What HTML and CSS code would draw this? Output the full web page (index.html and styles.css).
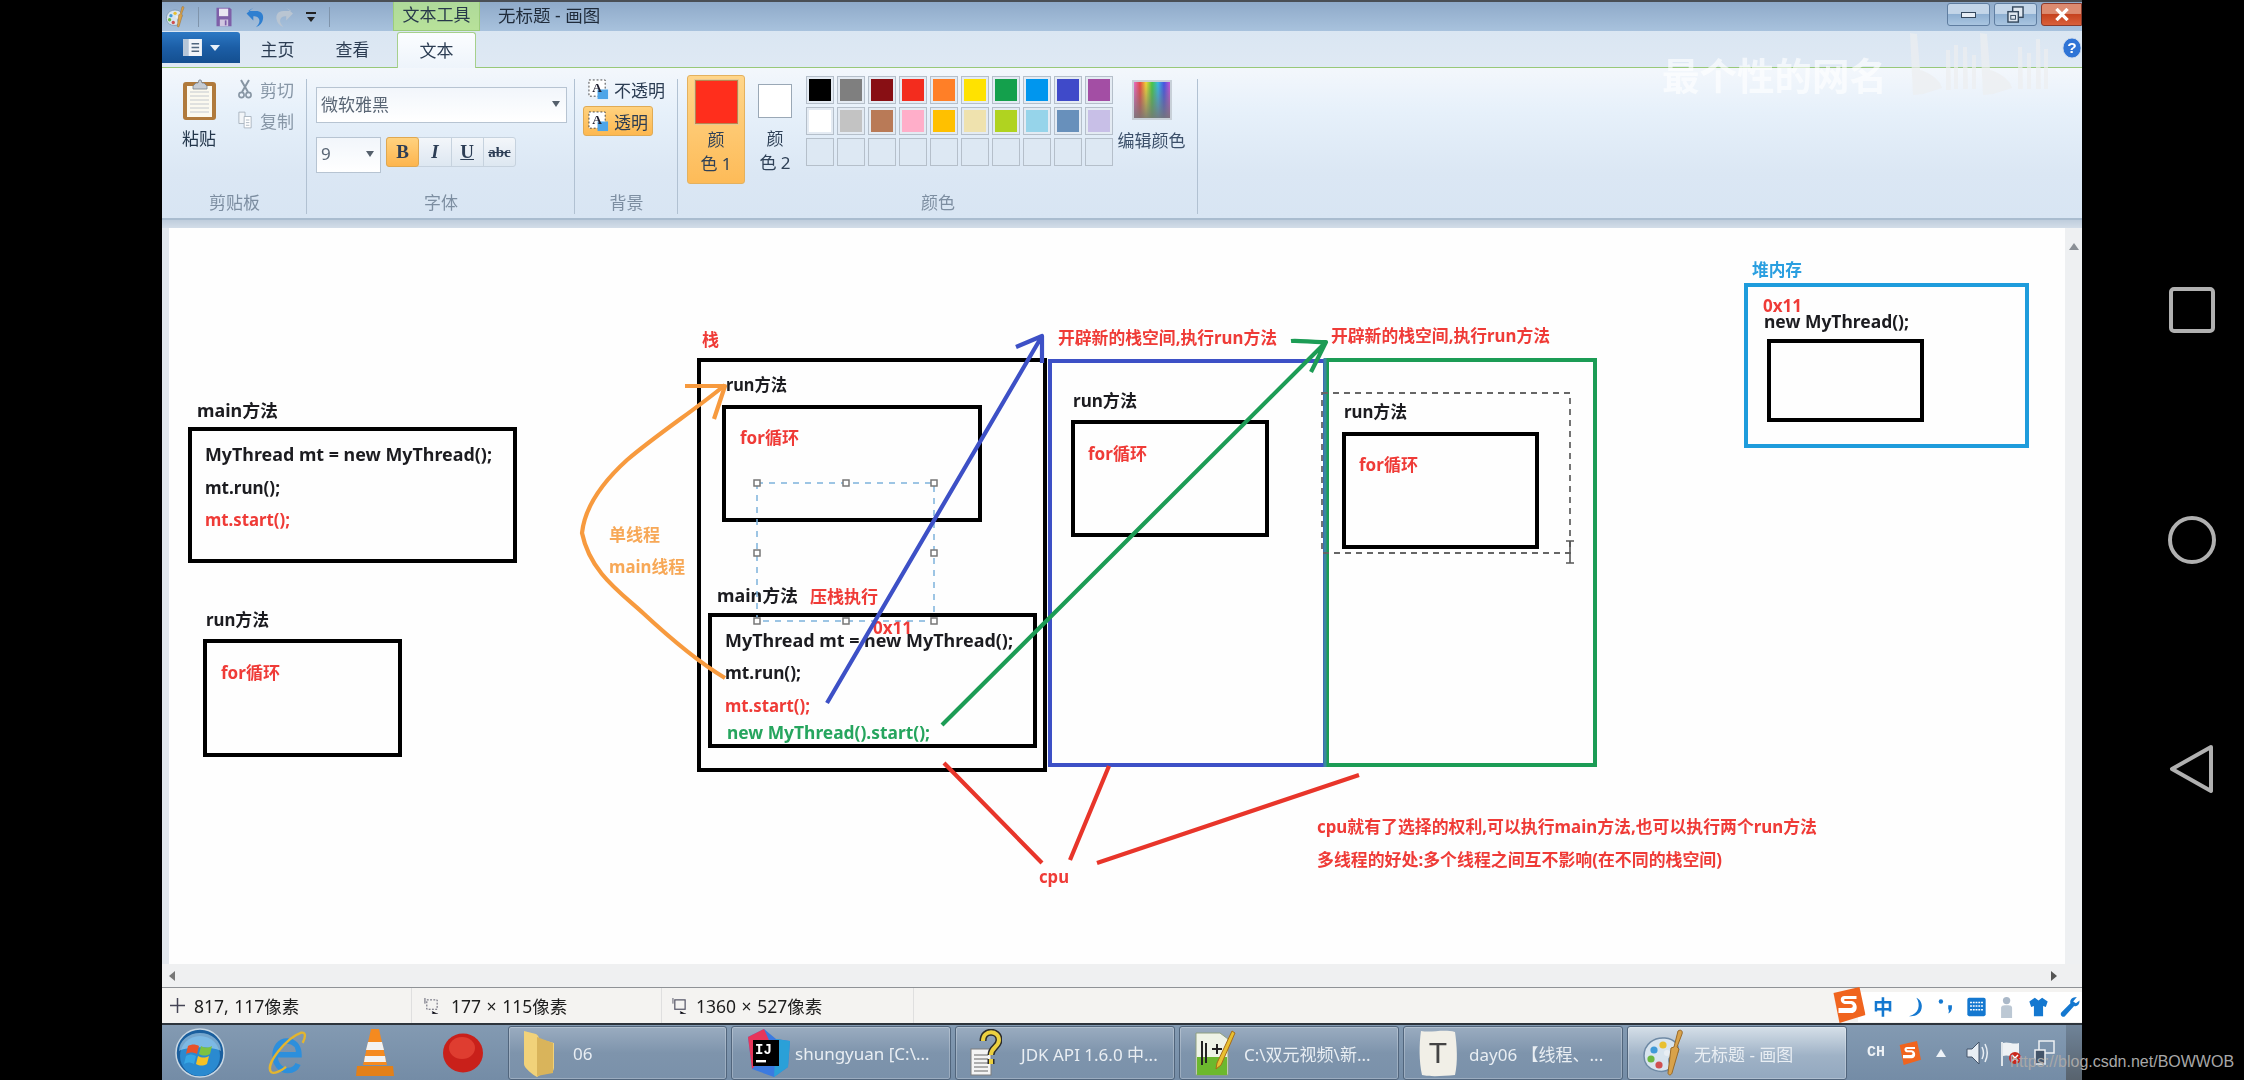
FILE: index.html
```html
<!DOCTYPE html>
<html lang="zh-CN">
<head>
<meta charset="utf-8">
<title>无标题 - 画图</title>
<link rel="stylesheet" href="styles.css">
</head>
<body>
<svg class="defs" width="0" height="0" aria-hidden="true">
  <defs>
    <symbol id="palette" viewBox="0 0 48 48">
      <path d="M3 27C3 15 13 8 24 9c10 1 15 8 13 14-2 5-8 3-9 7-1 4 3 6 0 10-4 5-25 3-25-13z" fill="#d8e4ee" stroke="#6f8aa5" stroke-width="1.5"/>
      <circle cx="13" cy="21" r="3.6" fill="#3f9ad8"/><circle cx="22" cy="16" r="3.6" fill="#e8c030"/>
      <circle cx="10" cy="30" r="3.6" fill="#6cb840"/><circle cx="18" cy="36" r="3.6" fill="#d05050"/><circle cx="26" cy="24" r="3" fill="#e8eef4"/>
      <path d="M37 2c3-2 5 0 4 3l-5 13 2 2-7 24c-1 3-4 2-4 0l3-25 3-1z" fill="#d9a24a" stroke="#9a6a28" stroke-width="1"/>
    </symbol>
    <symbol id="sogou" viewBox="0 0 36 36">
      <path d="M4 6L30 0l6 28-26 8z" fill="#f0641e"/>
      <path d="M27 9H15c-5 0-5 7 0 8h6c3 0 3 4 0 4H9v5h13c7 0 7-11 0-12h-6c-2 0-2-2 0-2h11z" fill="#fff"/>
    </symbol>
    <symbol id="txtA" viewBox="0 0 22 22">
      <rect x="1" y="1" width="17" height="17" fill="#fff" stroke="#444" stroke-dasharray="2 2"/>
      <rect x="10" y="11" width="11" height="10" fill="#4ea5e8"/>
      <text x="9.5" y="14" class="a-glyph">A</text>
    </symbol>
  </defs>
</svg>

<div class="app">
  <header class="titlebar">
    <div class="qat">
      <svg class="i-palette" viewBox="0 0 48 48"><use href="#palette"/></svg>
      <span class="vsep"></span>
      <svg class="i-save" viewBox="0 0 20 24"><path d="M1 1h16l2 2v20H1z" fill="#7e5fa8"/><rect x="4" y="2" width="11" height="9" fill="#e9e5f2"/><rect x="5" y="15" width="10" height="8" fill="#cfc6e0"/><rect x="11" y="16" width="2" height="6" fill="#7e5fa8"/></svg>
      <svg class="i-undo" viewBox="0 0 22 26"><path d="M3 6h9c7 0 10 5 8 11-1 4-5 7-8 8 3-3 5-6 4-9-1-3-3-4-6-4H9v5L1 9l8-7z" fill="#2f7fd0"/></svg>
      <svg class="i-redo" viewBox="0 0 22 26"><path d="M19 6h-9C3 6 0 11 2 17c1 4 5 7 8 8-3-3-5-6-4-9 1-3 3-4 6-4h1v5l8-8-8-7z" fill="#b9c5d2"/></svg>
      <svg class="i-drop" viewBox="0 0 10 12"><rect y="1" width="10" height="2" fill="#222"/><path d="M1 6h8l-4 5z" fill="#222"/></svg>
      <span class="vsep"></span>
    </div>
    <div class="ctx-tab">文本工具</div>
    <div class="doc-title">无标题 - 画图</div>
    <div class="winbtns">
      <div class="wbtn"><span class="glyph-min"></span></div>
      <div class="wbtn"><svg class="glyph-res" viewBox="0 0 18 18"><rect x="6" y="1" width="11" height="11" fill="#dfe7f0" stroke="#33475c" stroke-width="1.5"/><rect x="1" y="6" width="11" height="11" fill="#dfe7f0" stroke="#33475c" stroke-width="1.5"/><rect x="4" y="10" width="5" height="4" fill="none" stroke="#33475c"/></svg></div>
      <div class="wbtn wclose"><svg class="glyph-x" viewBox="0 0 16 14"><path d="M2 1l12 12M14 1L2 13" stroke="#fff" stroke-width="3.6"/></svg></div>
    </div>
  </header>

  <nav class="tabs">
    <div class="appmenu">
      <svg class="i-menu" viewBox="0 0 20 18"><rect width="20" height="18" fill="#f2f5f9"/><rect width="6" height="18" fill="#b5c6d8"/><path d="M9 5h8M9 9h8M9 13h8" stroke="#50677f" stroke-width="1.6"/></svg>
      <span class="menu-caret"></span>
    </div>
    <div class="tab tab-home">主页</div>
    <div class="tab tab-view">查看</div>
    <div class="tab tab-active">文本</div>
    <svg class="help" viewBox="0 0 22 24"><ellipse cx="11" cy="12" rx="10" ry="11" fill="#2f74d6" stroke="#cfdcec"/><text x="11" y="18" class="help-q">?</text></svg>
    <div class="wm-text">最个性的网名</div>
    <svg class="wm-logo" viewBox="0 0 138 62">
      <g fill="#eceef0" fill-opacity=".7">
        <path d="M0 0l7 1 3 36c8 2 14 6 20 13l2 5-19 6-10 1z"/>
        <path d="M36 17h4l1 40h-5zM44 12h4v44h-4zM53 14h4l1 42h-5zM62 22h4v34h-4z"/>
        <path d="M70 0l7 1 3 36c8 2 14 6 20 13l2 5-19 6-10 1z"/>
        <path d="M108 14h4l1 42h-5zM117 20h4v36h-4zM126 6h4l1 50h-5zM134 16h4v40h-4z"/>
      </g>
    </svg>
  </nav>

  <section class="ribbon">
    <div class="group g-clip">
      <div class="group-body clip-body">
        <div class="paste">
          <svg class="i-paste" viewBox="0 0 35 42"><rect x="1" y="3" width="33" height="38" rx="3" fill="#b07a3c"/><rect x="5" y="7" width="25" height="31" fill="#fbf9ef"/><path d="M8 13h19M8 17h19M8 21h19M8 25h19M8 29h19M8 33h19" stroke="#c4c9cf"/><path d="M11 7l3-3h2l1-3h2l1 3h2l3 3v3H11z" fill="#c6ccd4" stroke="#79838e" stroke-width=".8"/></svg>
          <span>粘贴</span>
        </div>
        <div class="clip-small">
          <div class="clip-row"><svg class="i-cut" viewBox="0 0 14 20"><path d="M3 1l7 12M11 1L4 13" stroke="#8795a3" stroke-width="2"/><circle cx="3.5" cy="16" r="2.6" fill="none" stroke="#8795a3" stroke-width="1.6"/><circle cx="10.5" cy="16" r="2.6" fill="none" stroke="#8795a3" stroke-width="1.6"/></svg><span>剪切</span></div>
          <div class="clip-row"><svg class="i-cut" viewBox="0 0 16 20"><path d="M1 1h7v13H1z" fill="#f2f5f8" stroke="#a5b0bc"/><path d="M7 6h8v13H7z" fill="#fff" stroke="#a5b0bc"/><path d="M9 10h4M9 13h4M9 16h4" stroke="#a5b0bc"/></svg><span>复制</span></div>
        </div>
      </div>
      <div class="group-label">剪贴板</div>
    </div>

    <div class="group g-font">
      <div class="group-body font-body">
        <div class="combo combo-family"><span>微软雅黑</span><i class="caret"></i></div>
        <div class="font-row">
          <div class="combo combo-size"><span>9</span><i class="caret"></i></div>
          <div class="fmt">
            <div class="fmt-b fmt-on">B</div>
            <div class="fmt-b fmt-i">I</div>
            <div class="fmt-b fmt-u">U</div>
            <div class="fmt-b fmt-s">abc</div>
          </div>
        </div>
      </div>
      <div class="group-label">字体</div>
    </div>

    <div class="group g-bg">
      <div class="group-body bg-body">
        <div class="bg-opt"><svg class="i-a" viewBox="0 0 22 22"><use href="#txtA"/></svg><span>不透明</span></div>
        <div class="bg-opt bg-on"><svg class="i-a" viewBox="0 0 22 22"><use href="#txtA"/></svg><span>透明</span></div>
      </div>
      <div class="group-label">背景</div>
    </div>

    <div class="group g-color">
      <div class="group-body color-body">
        <div class="cbtn cbtn-on"><div class="big-swatch"></div><span>颜</span><span>色 1</span></div>
        <div class="cbtn cbtn-2"><div class="big-swatch2"></div><span>颜</span><span>色 2</span></div>
        <div class="swatches">
          <i class="sw c1"></i><i class="sw c2"></i><i class="sw c3"></i><i class="sw c4"></i><i class="sw c5"></i><i class="sw c6"></i><i class="sw c7"></i><i class="sw c8"></i><i class="sw c9"></i><i class="sw c10"></i>
          <i class="sw c11"></i><i class="sw c12"></i><i class="sw c13"></i><i class="sw c14"></i><i class="sw c15"></i><i class="sw c16"></i><i class="sw c17"></i><i class="sw c18"></i><i class="sw c19"></i><i class="sw c20"></i>
          <i class="sw"></i><i class="sw"></i><i class="sw"></i><i class="sw"></i><i class="sw"></i><i class="sw"></i><i class="sw"></i><i class="sw"></i><i class="sw"></i><i class="sw"></i>
        </div>
        <div class="edit"><div class="rainbow"></div><span>编辑颜色</span></div>
      </div>
      <div class="group-label">颜色</div>
    </div>
  </section>
  <div class="strip"></div>

  <main class="canvas-row">
    <div class="gutter"></div>
    <div class="canvas">
      <svg class="drawing" viewBox="169 228 1896 736" width="1896" height="736">
        <!-- left: main + run -->
        <text x="197" y="417" class="t" textLength="81" lengthAdjust="spacingAndGlyphs">main方法</text>
        <rect x="190" y="429" width="325" height="132" class="box"/>
        <text x="205" y="461" class="t" textLength="287" lengthAdjust="spacingAndGlyphs">MyThread mt = new MyThread();</text>
        <text x="205" y="494" class="t" textLength="75" lengthAdjust="spacingAndGlyphs">mt.run();</text>
        <text x="205" y="526" class="t red" textLength="85" lengthAdjust="spacingAndGlyphs">mt.start();</text>
        <text x="206" y="626" class="t" textLength="63" lengthAdjust="spacingAndGlyphs">run方法</text>
        <rect x="205" y="641" width="195" height="114" class="box"/>
        <text x="221" y="679" class="t red" textLength="59" lengthAdjust="spacingAndGlyphs">for循环</text>

        <!-- stack -->
        <text x="702" y="346" class="t red">栈</text>
        <rect x="699" y="360" width="346" height="410" class="box"/>
        <text x="726" y="391" class="t" textLength="61" lengthAdjust="spacingAndGlyphs">run方法</text>
        <rect x="724" y="407" width="256" height="113" class="box"/>
        <text x="740" y="444" class="t red" textLength="59" lengthAdjust="spacingAndGlyphs">for循环</text>
        <text x="717" y="602" class="t" textLength="81" lengthAdjust="spacingAndGlyphs">main方法</text>
        <text x="810" y="603" class="t red">压栈执行</text>
        <rect x="710" y="615" width="325" height="131" class="box"/>
        <text x="873" y="634" class="t red" textLength="39" lengthAdjust="spacingAndGlyphs">0x11</text>
        <text x="725" y="647" class="t" textLength="288" lengthAdjust="spacingAndGlyphs">MyThread mt = new MyThread();</text>
        <text x="725" y="679" class="t" textLength="76" lengthAdjust="spacingAndGlyphs">mt.run();</text>
        <text x="725" y="712" class="t red" textLength="85" lengthAdjust="spacingAndGlyphs">mt.start();</text>
        <text x="727" y="739" class="t green" textLength="203" lengthAdjust="spacingAndGlyphs">new MyThread().start();</text>

        <!-- text selection -->
        <rect x="757" y="483" width="177" height="138" class="sel"/>
        <rect x="754" y="480" width="6" height="6" class="hdl"/><rect x="843" y="480" width="6" height="6" class="hdl"/><rect x="931" y="480" width="6" height="6" class="hdl"/>
        <rect x="754" y="550" width="6" height="6" class="hdl"/><rect x="931" y="550" width="6" height="6" class="hdl"/>
        <rect x="754" y="618" width="6" height="6" class="hdl"/><rect x="843" y="618" width="6" height="6" class="hdl"/><rect x="931" y="618" width="6" height="6" class="hdl"/>

        <!-- orange -->
        <path d="M725 678C700 663 672 640 643 613C620 592 590 572 582 533C585 505 605 480 627 460C660 432 695 410 725 385" class="pen orange-s"/>
        <path d="M685 386H725L714 419" class="pen orange-s"/>
        <text x="609" y="541" class="t orange">单线程</text>
        <text x="609" y="573" class="t orange" textLength="76" lengthAdjust="spacingAndGlyphs">main线程</text>

        <!-- blue + green stacks -->
        <rect x="1050" y="361" width="275" height="404" class="box blue-s"/>
        <rect x="1327" y="360" width="268" height="405" class="box green-s"/>
        <path d="M1325 358V767" class="teal"/>
        <text x="1058" y="344" class="t red" textLength="219" lengthAdjust="spacingAndGlyphs">开辟新的栈空间,执行run方法</text>
        <text x="1331" y="342" class="t red" textLength="219" lengthAdjust="spacingAndGlyphs">开辟新的栈空间,执行run方法</text>
        <text x="1073" y="407" class="t" textLength="64" lengthAdjust="spacingAndGlyphs">run方法</text>
        <rect x="1073" y="422" width="194" height="113" class="box"/>
        <text x="1088" y="460" class="t red" textLength="59" lengthAdjust="spacingAndGlyphs">for循环</text>
        <rect x="1322" y="393" width="248" height="160" class="dash"/>
        <text x="1344" y="418" class="t" textLength="63" lengthAdjust="spacingAndGlyphs">run方法</text>
        <rect x="1344" y="434" width="193" height="113" class="box"/>
        <text x="1359" y="471" class="t red" textLength="59" lengthAdjust="spacingAndGlyphs">for循环</text>
        <path d="M1566 541h8M1570 541v22M1566 563h8" class="ibeam"/>

        <!-- arrows -->
        <path d="M827 703L1042 336M1016 347L1042 336V363" class="pen blue-s"/>
        <path d="M942 725L1326 342M1291 341C1300 340 1315 343 1326 342L1311 372" class="pen green-s"/>

        <!-- cpu -->
        <path d="M944 763L1042 863M1109 766L1070 860M1359 775L1097 863" class="pen red-s"/>
        <text x="1039" y="883" class="t red" textLength="30" lengthAdjust="spacingAndGlyphs">cpu</text>
        <text x="1317" y="833" class="t red" textLength="500" lengthAdjust="spacingAndGlyphs">cpu就有了选择的权利,可以执行main方法,也可以执行两个run方法</text>
        <text x="1317" y="866" class="t red" textLength="405" lengthAdjust="spacingAndGlyphs">多线程的好处:多个线程之间互不影响(在不同的栈空间)</text>

        <!-- heap -->
        <text x="1752" y="276" class="t sky" textLength="50" lengthAdjust="spacingAndGlyphs">堆内存</text>
        <rect x="1746" y="285" width="281" height="161" class="box sky-s"/>
        <text x="1763" y="312" class="t red" textLength="39" lengthAdjust="spacingAndGlyphs">0x11</text>
        <text x="1764" y="328" class="t" textLength="145" lengthAdjust="spacingAndGlyphs">new MyThread();</text>
        <rect x="1769" y="341" width="153" height="79" class="box"/>
      </svg>
    </div>
    <div class="vscroll"><i class="arrow-up"></i></div>
  </main>

  <div class="hscroll"><i class="arrow-left"></i><i class="arrow-right"></i></div>

  <footer class="status">
    <div class="st st-1">
      <svg class="st-i" viewBox="0 0 14 14"><path d="M7 0v14M0 7h14" stroke="#445" stroke-width="1.4"/></svg><span>817, 117像素</span>
    </div>
    <div class="st st-2">
      <svg class="st-i" viewBox="0 0 16 18"><rect x="3" y="3" width="11" height="10" fill="none" stroke="#556" stroke-dasharray="2 1.5"/><path d="M1 1v6M9 15v3h6" stroke="#556"/></svg><span>177 × 115像素</span>
    </div>
    <div class="st st-3">
      <svg class="st-i" viewBox="0 0 16 18"><rect x="3" y="3" width="11" height="10" fill="none" stroke="#556" stroke-width="1.3"/><path d="M1 1v6M9 15v3h6" stroke="#556"/></svg><span>1360 × 527像素</span>
    </div>
    <div class="ime">
      <svg class="ime-s" viewBox="0 0 36 36"><use href="#sogou"/></svg>
      <span class="ime-i ime-zh">中</span>
      <svg class="ime-i" viewBox="0 0 20 24"><path d="M12 2c5 7 3 18-8 20 6 1 14-2 14-11 0-4-3-8-6-9z" fill="#1478d0"/></svg>
      <svg class="ime-i" viewBox="0 0 20 24"><circle cx="5" cy="6" r="2.4" fill="#1478d0"/><path d="M13 10h4v3c0 3-2 5-4 6 1-2 1-3 0-5z" fill="#1478d0"/></svg>
      <svg class="ime-i" viewBox="0 0 22 24"><rect x="1" y="2" width="20" height="20" rx="2" fill="#1478d0"/><path d="M4 7h14M4 11h14M4 15h14" stroke="#fff" stroke-width="1.6" stroke-dasharray="2 1"/></svg>
      <svg class="ime-i" viewBox="0 0 20 24"><circle cx="9" cy="5" r="4" fill="#aab8c8"/><path d="M3 24V13c0-3 3-3 6-3s6 0 6 3v11z" fill="#bcc8d4"/></svg>
      <svg class="ime-i" viewBox="0 0 22 24"><path d="M7 2L1 6l2 6 3-1v11h10V11l3 1 2-6-6-4-4 3z" fill="#1478d0"/></svg>
      <svg class="ime-i" viewBox="0 0 22 24"><path d="M19 1c-5 0-8 3-7 7L2 18c-2 3 2 6 4 4L16 11c3 1 6-1 6-6l-4 3-3-2z" fill="#1478d0"/></svg>
    </div>
  </footer>

  <div class="taskbar">
    <div class="quick">
      <svg class="i-orb" viewBox="0 0 50 50">
        <circle cx="25" cy="25" r="24" fill="#1a5f9e" stroke="#c9d8e4" stroke-width="1.5"/>
        <circle cx="25" cy="28" r="20" fill="#2a8ad0"/>
        <path d="M4 23a21 18 0 0 1 42 0c-10-5-32-5-42 0z" fill="#bfe0f4" fill-opacity=".55"/>
        <path d="M13 18c4-2 7-2 11 0l-2 8c-4-2-7-2-11 0z" fill="#e8522a"/>
        <path d="M26 18c4 2 7 2 11 0l-2 8c-4 2-7 2-11 0z" fill="#7cc242"/>
        <path d="M11 28c4-2 7-2 10 0l-2 8c-4-2-7-2-10 0z" fill="#35a6e4"/>
        <path d="M23 28c4 2 7 2 11 0l-2 8c-4 2-7 2-11 0z" fill="#f6c125"/>
      </svg>
      <svg class="i-ie" viewBox="0 0 44 50">
        <path d="M12 27h23c0-9-5-15-13-15S9 19 9 28s6 16 14 16c5 0 9-2 11-7" fill="none" stroke="#2d8fdc" stroke-width="6"/>
        <path d="M5 46C-3 38 22 8 37 3c5-1 6 3 2 11M5 46c3 2 10-1 16-6" fill="none" stroke="#e3b52f" stroke-width="2.6"/>
      </svg>
      <svg class="i-vlc" viewBox="0 0 40 50"><path d="M16 1h8l8 36H8z" fill="#f58a1f"/><path d="M13 14h14l2 8H11zM10 28h20l1 6H9z" fill="#f2f2f2"/><path d="M2 38h36l1 10H1z" fill="#e2801a"/></svg>
      <svg class="i-rec" viewBox="0 0 42 40"><ellipse cx="21" cy="20" rx="20" ry="19.5" fill="#c9201a"/><ellipse cx="20" cy="15" rx="13" ry="11" fill="#e84a3a" fill-opacity=".7"/></svg>
    </div>
    <div class="tasks">
      <div class="task"><svg class="ti ti-folder" viewBox="0 0 32 48"><path d="M1 2l12 3c2 1 3 3 3 5l15 4v24c0 3-1 5-4 5l-7 1-6 4c-4-2-13-9-13-13z" fill="#f1d27a"/><path d="M14 8l16 6v30l-16 3z" fill="#d9b45b"/></svg><span>06</span></div>
      <div class="task"><svg class="ti ti-ij" viewBox="0 0 44 48"><path d="M2 8l16-8 12 10 14 2-2 26-14 10L6 40z" fill="#3b7ae0"/><path d="M2 8l16-8 8 18L6 40z" fill="#e8365a"/><path d="M30 10l14 2-2 26-14 10z" fill="#2aa0d8"/><rect x="7" y="11" width="26" height="26" fill="#000"/><text x="9" y="25" class="ij-t">IJ</text><rect x="10" y="31" width="10" height="2.4" fill="#fff"/></svg><span>shungyuan [C:\...</span></div>
      <div class="task"><svg class="ti ti-help" viewBox="0 0 32 48"><rect x="1" y="20" width="20" height="26" fill="#f4f4f4" stroke="#7e7e7e"/><path d="M4 26h14M4 30h14M4 34h14M4 38h14M4 42h14" stroke="#666"/><path d="M13 12c0-12 16-11 16-1 0 7-8 7-8 15M21 30v5" fill="none" stroke="#2b2b2b" stroke-width="7"/><path d="M13 12c0-12 16-11 16-1 0 7-8 7-8 15M21 30v5" fill="none" stroke="#ecd040" stroke-width="4"/></svg><span>JDK API 1.6.0 中...</span></div>
      <div class="task"><svg class="ti ti-npp" viewBox="0 0 42 48"><path d="M2 4h24l8 6v36H2z" fill="#eef3e6" stroke="#8fa080"/><rect x="3" y="28" width="30" height="18" fill="#6cb82e"/><path d="M8 12v24M12 14v20M18 20h10M23 15v10" stroke="#222" stroke-width="2"/><path d="M38 2l3 2-14 32-5 4 1-6z" fill="#e8c030" stroke="#a86c18"/></svg><span>C:\双元视频\新...</span></div>
      <div class="task"><svg class="ti ti-typ" viewBox="0 0 40 48"><path d="M3 2c10 2 22-2 34 1 2 14 3 30 0 43-12 1-24 2-33 0-3-14-3-30-1-44z" fill="#f1efe7"/><text x="20" y="34" class="typ-t">T</text></svg><span>day06 【线程、...</span></div>
      <div class="task task-on"><svg class="ti ti-paint" viewBox="0 0 48 48"><use href="#palette"/></svg><span>无标题 - 画图</span></div>
    </div>
    <div class="tray">
      <span class="tray-ch">CH</span>
      <svg class="tray-s" viewBox="0 0 36 36"><use href="#sogou"/></svg>
      <svg class="tray-up" viewBox="0 0 10 8"><path d="M5 0l5 8H0z" fill="#eef3f8"/></svg>
      <svg class="tray-i" viewBox="0 0 22 26"><path d="M1 9h5l7-7v22l-7-7H1z" fill="#e8eef4" stroke="#44556a"/><path d="M16 7c2 4 2 8 0 12M19 4c3 6 3 12 0 18" fill="none" stroke="#e8eef4" stroke-width="1.5"/></svg>
      <svg class="tray-i" viewBox="0 0 22 26"><path d="M2 2v24" stroke="#dfe5ea" stroke-width="2"/><path d="M3 3c5-2 10 2 16 0v13c-6 2-11-2-16 0z" fill="#eef1f4"/><circle cx="15" cy="18" r="6" fill="#c9281c"/><path d="M12 15l6 6M18 15l-6 6" stroke="#fff" stroke-width="1.5"/></svg>
      <svg class="tray-i" viewBox="0 0 22 26"><rect x="5" y="1" width="15" height="12" fill="none" stroke="#eef1f4" stroke-width="1.5"/><rect x="1" y="10" width="10" height="14" fill="#44556a" stroke="#eef1f4" stroke-width="1.5"/></svg>
      <div class="show-desktop"></div>
    </div>
  </div>
</div>

<aside class="navbar">
  <svg class="nav-i" viewBox="0 0 48 50"><rect x="3" y="3" width="42" height="42" rx="3" class="nav-s"/></svg>
  <svg class="nav-i" viewBox="0 0 48 50"><circle cx="24" cy="25" r="22" class="nav-s"/></svg>
  <svg class="nav-i" viewBox="0 0 48 50"><path d="M43 3L4 25l39 22z" class="nav-s nav-j"/></svg>
</aside>

<div class="csdn">https://blog.csdn.net/BOWWOB</div>
</body>
</html>
```

FILE: styles.css
```css
* { box-sizing: border-box; }
html, body { margin: 0; padding: 0; }
body {
  width: 2244px; height: 1080px; overflow: hidden; background: #000;
  display: flex; padding-left: 162px; position: relative;
  font-family: "Noto Sans", "Noto Sans CJK SC", sans-serif;
  font-size: 17px; color: #2b3c52;
}
.defs { position: absolute; }
.a-glyph { font: 700 14px "Liberation Serif", serif; fill: #223; text-anchor: middle; }

.app { width: 1920px; height: 1080px; display: flex; flex-direction: column; flex: none; filter: blur(.55px); background: #dce8f4; overflow: hidden; }

/* title bar */
.titlebar {
  height: 31px; flex: none; display: flex; align-items: stretch; position: relative;
  border-top: 2px solid #4a4f55;
  background: linear-gradient(#8faac9, #a8c2dd);
}
.qat { display: flex; align-items: center; width: 231px; padding-left: 2px; flex: none; }
.i-palette { width: 24px; height: 22px; }
.vsep { width: 1px; height: 20px; background: #7f94ab; margin-left: 10px; }
.i-save { width: 20px; height: 20px; margin-left: 15px; }
.i-undo { width: 20px; height: 22px; margin-left: 11px; }
.i-redo { width: 19px; height: 22px; margin-left: 10px; }
.i-drop { width: 10px; height: 12px; margin-left: 12px; }
.qat .vsep:last-child { margin-left: 13px; }
.ctx-tab {
  width: 87px; display: flex; align-items: center; justify-content: center; padding-bottom: 6px; flex: none;
  background: linear-gradient(#aed99a, #b8e29a); border: 1px solid #9ccc7c; border-top: none; color: #27384a;
  font-size: 17px;
}
.doc-title { margin-left: 18px; line-height: 27px; font-size: 17.5px; color: #1f2b3a; }
.winbtns { margin-left: auto; display: flex; gap: 4px; padding-top: 1px; }
.wbtn {
  width: 43px; height: 23px; border: 1px solid #5f7da0; border-radius: 3px;
  background: linear-gradient(#c3d5e8 45%, #8fb0d2 50%, #a9c5e0);
  display: flex; align-items: center; justify-content: center;
}
.wclose { width: 41px; border-color: #8a3b2c; border-radius: 3px 0 0 3px; background: linear-gradient(#dc8b70 45%, #c6431f 50%, #d9603a); }
.glyph-min { width: 15px; height: 6px; background: #e6edf5; border: 1px solid #34485e; }
.glyph-res { width: 17px; height: 17px; }
.glyph-x { width: 16px; height: 13px; }

/* tabs */
.tabs {
  height: 37px; flex: none; display: flex; position: relative; padding-top: 1px;
  background: linear-gradient(#dae6f2, #dfe9f4); border-bottom: 1px solid #98c878;
}
.appmenu {
  width: 78px; height: 31px; border-radius: 0 3px 0 0; display: flex; align-items: center;
  padding-left: 21px; gap: 8px; background: linear-gradient(#2c78c4, #1c5ea6 50%, #144f90);
}
.i-menu { width: 19px; height: 17px; }
.menu-caret { border: 5px solid transparent; border-top: 6px solid #e8f0f8; margin-top: 5px; }
.tab { height: 33px; display: flex; align-items: center; justify-content: center; font-size: 17px; flex: none; }
.tab-home { width: 75px; }
.tab-view { width: 75px; }
.tab-active {
  width: 79px; margin-left: 7px; height: 36px; margin-bottom: -1px; padding-bottom: 3px;
  background: linear-gradient(#fbfdff, #eef4fb); border: 1px solid #a6d08c; border-bottom: none; border-radius: 3px 3px 0 0;
  position: relative; z-index: 1;
}
.help { position: absolute; left: 1900px; top: 5px; width: 20px; height: 24px; }
.help-q { font: 700 17px "Liberation Sans", sans-serif; fill: #fff; text-anchor: middle; }
.wm-text {
  position: absolute; left: 1500px; top: 24px; font: 700 37.5px/1 "Noto Sans CJK SC", sans-serif;
  color: rgba(255,255,255,.62); white-space: nowrap; z-index: 3;
}
.wm-logo { position: absolute; left: 1748px; top: 2px; width: 138px; height: 62px; z-index: 3; }

/* ribbon */
.ribbon {
  height: 150px; flex: none; display: flex; padding-top: 7px;
  background: linear-gradient(#f3f7fc, #e6f0fa 30%, #dbe7f4 70%, #d8e5f3);
}
.group { position: relative; display: flex; flex-direction: column; flex: none; height: 143px; }
.group::after { content: ""; position: absolute; right: 0; top: 4px; bottom: 4px; width: 1px; background: #b1c1d2; }
.group-body { height: 118px; flex: none; }
.group-label { height: 20px; line-height: 20px; text-align: center; color: #7d8ea1; font-size: 17px; }
.g-clip { width: 145px; }
.g-font { width: 268px; }
.g-bg { width: 103px; }
.g-color { width: 520px; }

.clip-body { display: flex; padding: 4px 0 0 19px; }
.paste { width: 36px; display: flex; flex-direction: column; align-items: center; font-size: 17px; color: #23364b; }
.i-paste { width: 35px; height: 42px; margin-bottom: 4px; }
.clip-small { margin-left: 21px; display: flex; flex-direction: column; gap: 11px; }
.clip-row { display: flex; align-items: center; gap: 8px; height: 20px; color: #8796a6; }
.i-cut { width: 14px; height: 20px; }

.font-body { padding: 12px 0 0 9px; display: flex; flex-direction: column; gap: 14px; }
.combo {
  height: 36px; background: linear-gradient(#f2f6fb, #fff); border: 1px solid #b7c4d2;
  display: flex; align-items: center; justify-content: space-between; padding: 0 6px 4px 4px; color: #5a6675;
}
.combo-family { width: 251px; }
.combo-size { width: 65px; }
.caret { border: 4px solid transparent; border-top: 6px solid #55606c; margin-top: 5px; }
.font-row { display: flex; gap: 5px; align-items: flex-start; }
.fmt { display: flex; width: 130px; height: 30px; border: 1px solid #c6d2de; border-radius: 3px; background: linear-gradient(#f3f6fa, #dde7f1); }
.fmt-b {
  flex: 1; display: flex; align-items: center; justify-content: center; border-right: 1px solid #c6d2de;
  font: 700 19px "Liberation Serif", serif; color: #2c3d55;
}
.fmt-on { background: linear-gradient(#ffd27f, #fdb54e); border: 1px solid #e0a850; border-radius: 3px; margin: -1px 0 -1px -1px; }
.fmt-i { font-style: italic; }
.fmt-u { text-decoration: underline; }
.fmt-s { border-right: none; font-size: 15px; text-decoration: line-through; }

.bg-body { padding: 1px 0 0 8px; display: flex; flex-direction: column; gap: 3px; }
.bg-opt { height: 27px; display: flex; align-items: center; gap: 5px; padding-left: 5px; color: #2b3c52; }
.bg-on { width: 70px; height: 30px; background: linear-gradient(#ffd27f, #fdb850); border: 1px solid #e0ab55; border-radius: 3px; padding-left: 4px; }
.i-a { width: 21px; height: 21px; flex: none; }

.color-body { display: flex; padding-left: 9px; align-items: flex-start; }
.cbtn { display: flex; flex-direction: column; align-items: center; flex: none; line-height: 24px; color: #2f4157; }
.cbtn-on { width: 58px; height: 109px; padding-top: 4px; background: linear-gradient(#ffd68a, #fdbb58); border: 1px solid #e4b15e; border-radius: 3px; }
.cbtn-on span:first-of-type, .cbtn-2 span:first-of-type { margin-top: 4px; }
.big-swatch { width: 43px; height: 44px; background: #ff2e1c; border: 1px solid #b8864e; outline: 1px solid #e8c994; }
.cbtn-2 { width: 46px; margin-left: 7px; padding-top: 9px; }
.big-swatch2 { width: 34px; height: 34px; background: #fff; border: 1px solid #9aa8b6; margin-bottom: 5px; }
.swatches { margin: 1px 0 0 8px; width: 307px; flex: none; display: grid; grid-template-columns: repeat(10, 28px); grid-auto-rows: 28px; gap: 3px; }
.sw { display: block; border: 3px solid #e4ebf3; outline: 1px solid #b5bfca; outline-offset: -1px; background: #dde8f3; }
.sw:nth-child(n+21) { border: 1px solid #b5bfca; outline: none; }
.c1 { background: #000; } .c2 { background: #7f7f7f; } .c3 { background: #880f14; } .c4 { background: #f32c1e; }
.c5 { background: #ff7f27; } .c6 { background: #ffe200; } .c7 { background: #14a04c; } .c8 { background: #0096ee; }
.c9 { background: #3f4ac9; } .c10 { background: #a34ea4; } .c11 { background: #fff; } .c12 { background: #c3c3c3; }
.c13 { background: #b97a57; } .c14 { background: #ffaec9; } .c15 { background: #ffc000; } .c16 { background: #efe2ae; }
.c17 { background: #b0d320; } .c18 { background: #96d4ea; } .c19 { background: #6890bb; } .c20 { background: #c8bfe7; }
.edit { margin-left: 5px; width: 67px; flex: none; display: flex; flex-direction: column; align-items: center; white-space: nowrap; color: #3c506a; padding-top: 5px; }
.rainbow {
  width: 40px; height: 40px; border: 2px solid #c8d0d8; margin-bottom: 7px;
  background: linear-gradient(rgba(255,255,255,.1), rgba(120,120,120,.9)),
    linear-gradient(90deg, #e060c0, #e83030, #f0d020, #30c030, #20b0e0, #3040e0, #c040d0);
}

.strip { height: 10px; flex: none; border-top: 2px solid #a9bccf; background: linear-gradient(#bfcddc, #d3dde8); }

/* canvas */
.canvas-row { height: 736px; flex: none; display: flex; }
.gutter { width: 7px; flex: none; background: #e2e7ed; }
.canvas { width: 1896px; flex: none; background: #fefefe; overflow: hidden; }
.drawing { display: block; }
.vscroll { flex: 1; background: #eef0f2; display: flex; justify-content: center; padding-top: 10px; }
.arrow-up { border: 5px solid transparent; border-bottom: 7px solid #8a8f96; height: 0; }

.t { font-family: "Noto Sans", "Noto Sans CJK SC", sans-serif; font-weight: 700; font-size: 17px; fill: #1c1c20; }
.red { fill: #ef3b37; }
.green { fill: #26a55e; }
.orange { fill: #f7a857; }
.sky { fill: #2a9fe0; }
.box { fill: none; stroke: #000; stroke-width: 4; }
.blue-s { stroke: #3d50c6; }
.green-s { stroke: #1c9c55; }
.sky-s { stroke: #1e9cdc; }
.teal { stroke: #3a88a0; stroke-width: 3; fill: none; }
.pen { fill: none; stroke-width: 4.2; stroke-linecap: butt; stroke-linejoin: round; }
.orange-s { stroke: #f79a3e; }
.red-s { stroke: #e8352a; }
.sel { fill: none; stroke: #7db2dc; stroke-width: 1.5; stroke-dasharray: 6 6; }
.hdl { fill: #fff; stroke: #777; stroke-width: 1.5; }
.dash { fill: none; stroke: #666; stroke-width: 1.8; stroke-dasharray: 6 5; }
.ibeam { fill: none; stroke: #555; stroke-width: 1.6; }

/* scroll + status */
.hscroll { height: 24px; flex: none; background: #eff0f1; border-bottom: 1px solid #8f9296; display: flex; justify-content: space-between; align-items: center; padding: 0 25px 0 8px; }
.arrow-left { border: 5px solid transparent; border-right: 6px solid #777; margin-left: -6px; }
.arrow-right { border: 5px solid transparent; border-left: 6px solid #555; margin-right: -5px; }
.status { height: 35px; flex: none; display: flex; background: #f4f3f1; position: relative; color: #1d1d1d; }
.st { display: flex; align-items: center; border-right: 1px solid #dfdfdf; padding-left: 8px; font-size: 17.5px; word-spacing: 1px; white-space: nowrap; flex: none; }
.st-1 { width: 250px; gap: 9px; }
.st-2 { width: 250px; gap: 12px; padding-left: 12px; }
.st-3 { width: 252px; gap: 9px; padding-left: 10px; }
.st-i { width: 15px; height: 17px; flex: none; }
.ime {
  margin-left: auto; width: 224px; height: 30px; align-self: flex-end; margin-bottom: 1px; background: #fff; position: relative;
  display: flex; align-items: center; padding-left: 15px; gap: 10px;
}
.ime-s { position: absolute; left: -29px; top: -5px; width: 37px; height: 36px; }
.ime-i { width: 21px; height: 22px; flex: none; }
.ime-zh { font: 700 20px/22px "Noto Sans CJK SC", sans-serif; color: #1478d0; }

/* taskbar */
.taskbar {
  height: 57px; flex: none; display: flex; align-items: stretch; border-top: 2px solid #2d343c;
  background: linear-gradient(#839ab2, #748ca6);
}
.quick { width: 346px; flex: none; display: flex; align-items: center; position: relative; padding-left: 13px; }
.i-orb { width: 50px; height: 50px; flex: none; }
.i-ie { width: 44px; height: 46px; margin-left: 40px; flex: none; }
.i-vlc { width: 40px; height: 50px; margin-left: 46px; flex: none; }
.i-rec { width: 42px; height: 40px; margin-left: 47px; flex: none; }
.tasks { display: flex; gap: 4px; flex: none; }
.task {
  width: 219px; height: 54px; border: 1px solid #51657c; border-radius: 3px; margin-top: 1px;
  background: linear-gradient(#9aacc0, #7e94ac 50%, #7a91aa);
  box-shadow: inset 0 0 0 1px rgba(255,255,255,.25);
  display: flex; align-items: center; gap: 5px; padding-left: 14px; color: #e9eef3; white-space: nowrap;
}
.task:nth-child(n+2) { width: 220px; }
.task-on { background: linear-gradient(#d5dfe8, #9fb2c6 55%, #93a8bf); }
.ti { width: 34px; height: 48px; flex: none; }
.ti-folder { width: 32px; margin-right: 13px; }
.ti-ij { width: 44px; }
.ti-help { width: 32px; margin-right: 14px; }
.ti-npp { width: 42px; margin-right: 3px; }
.ti-typ { width: 40px; margin-right: 6px; }
.ti-paint { width: 48px; margin-left: -1px; }
.ij-t { font: 700 14px "Liberation Mono", monospace; fill: #fff; }
.typ-t { font: 400 30px "Liberation Sans", sans-serif; fill: #444; text-anchor: middle; }
.tray { flex: 1; position: relative; display: flex; align-items: center; padding-left: 20px; color: #eef2f6; }
.tray-ch { font: 700 15px "Liberation Mono", monospace; width: 30px; }
.tray-s { width: 24px; height: 28px; margin-right: 15px; }
.tray-up { width: 10px; height: 8px; margin-right: 20px; }
.tray-i { width: 22px; height: 26px; margin-right: 12px; }
.show-desktop { position: absolute; right: 0; top: 0; bottom: 0; width: 16px; background: linear-gradient(#6f8398, #58636e); }

/* android nav */
.navbar { flex: 1; height: 1080px; display: flex; flex-direction: column; justify-content: center; align-items: center; gap: 179px; padding-left: 58px; }
.nav-i { width: 48px; height: 50px; }
.nav-s { fill: none; stroke: #b0b0b0; stroke-width: 4; }
.nav-j { stroke-linejoin: round; }

.csdn { position: absolute; left: 2010px; top: 1050px; font: 400 16px/24px "Liberation Sans", sans-serif; color: #a8a8a8; white-space: nowrap; }
```
